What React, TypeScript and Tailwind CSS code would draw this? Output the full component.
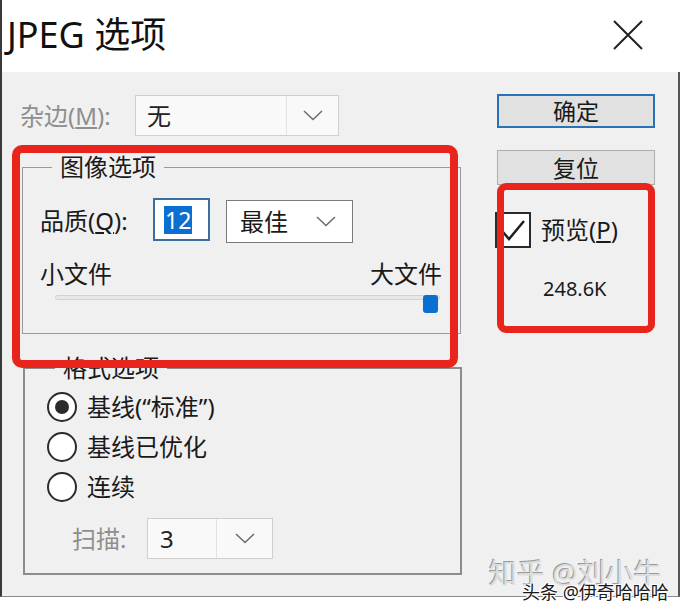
import React from "react";

const font = { fontFamily: '"Noto Sans", "Noto Sans CJK SC", sans-serif' };

function Chevron({ className = "" }: { className?: string }) {
  return (
    <svg width="20" height="11" viewBox="0 0 20 11" className={className}>
      <path d="M1 1 L10 9.5 L19 1" fill="none" stroke="#6b6b6b" strokeWidth="1.5" />
    </svg>
  );
}

function Radio({ checked, label }: { checked?: boolean; label: string }) {
  return (
    <div className="flex h-[40px] items-center gap-[10px]">
      <span className="flex h-[30px] w-[30px] items-center justify-center rounded-full border-2 border-[#2b2b2b] bg-white">
        {checked && <span className="h-[14px] w-[14px] rounded-full bg-[#2b2b2b]" />}
      </span>
      <span className="text-[24px] leading-[28px] text-[#1a1a1a]">{label}</span>
    </div>
  );
}

export default function App() {
  return (
    <div className="relative h-[616px] w-[680px] overflow-hidden bg-white" style={font}>
      {/* title bar */}
      <div className="flex h-[72px] items-center justify-between border-l-2 border-[#3a3a3a] pl-[5px] pr-[36px]">
        <div className="pb-[2px] text-[36px] leading-[44px] text-[#111]">JPEG 选项</div>
        <svg width="32" height="32" viewBox="0 0 32 32" className="mb-[2px]">
          <path d="M2 2 L30 30 M30 2 L2 30" stroke="#222" strokeWidth="2" />
        </svg>
      </div>

      {/* body */}
      <div className="flex h-[525px] border-b border-l-2 border-r-2 border-b-[#8a8a8a] border-l-[#3a3a3a] border-r-[#555] bg-[#f0f0f0]">
        {/* left column */}
        <div className="w-[461px] pl-[18px] pt-[23px]">
          <div className="flex h-[41px] items-center">
            <span className="w-[115px] text-[24px] leading-[28px] text-[#8e8e8e]">
              杂边(<u>M</u>):
            </span>
            <div className="flex h-[41px] w-[204px] items-center border border-[#cfcfcf] bg-[#f9f9f9]">
              <span className="flex-1 pl-[11px] text-[24px] leading-[28px] text-[#222]">无</span>
              <span className="flex h-full w-[52px] items-center justify-center border-l border-[#e2e2e2]">
                <Chevron />
              </span>
            </div>
          </div>

          <fieldset className="ml-[2px] mt-[15px] w-[439px] border border-[#9a9a9a] pb-[20px] pl-[17px] pr-[18px] pt-[15px]">
            <legend className="ml-[12px] px-[8px] text-[24px] leading-[32px] text-[#1a1a1a]">图像选项</legend>
            <div className="flex h-[45px] items-start">
              <span className="w-[113px] self-center text-[24px] leading-[28px] text-[#1a1a1a]">
                品质(<u>Q</u>):
              </span>
              <div className="flex h-[43px] w-[57px] items-center border-2 border-[#3d6d9e] bg-white pl-[9px]">
                <span className="bg-[#0a6fd0] px-[1px] text-[23px] leading-[28px] text-white">12</span>
              </div>
              <div className="ml-[16px] mt-[2px] flex h-[43px] w-[127px] items-center border border-[#7a7a7a] bg-white">
                <span className="flex-1 pl-[13px] text-[24px] leading-[28px] text-[#1a1a1a]">最佳</span>
                <Chevron className="mr-[16px]" />
              </div>
            </div>
            <div className="mt-[17px] flex justify-between text-[24px] leading-[28px] text-[#1a1a1a]">
              <span>小文件</span>
              <span>大文件</span>
            </div>
            <div className="relative mt-[5px] h-[18px]">
              <div className="ml-[15px] mt-[7px] h-[5px] w-[385px] rounded-full border border-[#d2d2d2] bg-[#e8e8e8]" />
              <div className="absolute left-[383px] top-0 h-[18px] w-[15px] rounded-[3px] bg-[#0a6fd0]" />
            </div>
          </fieldset>

          <fieldset className="ml-[3px] mt-[18px] w-[439px] border-2 border-[#8c8c8c] pb-[14px] pl-[22px] pt-[3px]">
            <legend className="ml-[8px] px-[8px] text-[24px] leading-[32px] text-[#1a1a1a]">格式选项</legend>
            <Radio checked label={"基线(\u201C标准\u201D)"} />
            <Radio label="基线已优化" />
            <Radio label="连续" />
            <div className="mt-[11px] flex h-[41px] items-center pl-[25px]">
              <span className="w-[75px] text-[24px] leading-[28px] text-[#8e8e8e]">扫描:</span>
              <div className="flex h-[41px] w-[126px] items-center border border-[#cfcfcf] bg-[#f9f9f9]">
                <span className="flex-1 pl-[12px] text-[24px] leading-[28px] text-[#222]">3</span>
                <span className="flex h-full w-[56px] items-center justify-center border-l border-[#e2e2e2]">
                  <Chevron />
                </span>
              </div>
            </div>
          </fieldset>
        </div>

        {/* right column */}
        <div className="ml-[34px] w-[158px] pt-[22px]">
          <button className="flex h-[34px] w-full items-center justify-center border-2 border-[#2a72b5] bg-[#e1e1e1] text-[23px] leading-[28px] text-[#1a1a1a]">
            确定
          </button>
          <button className="mt-[22px] flex h-[35px] w-full items-center justify-center border border-[#adadad] bg-[#e1e1e1] text-[23px] leading-[28px] text-[#1a1a1a]">
            复位
          </button>
          <div className="-ml-[2px] mt-[27px] flex h-[36px] items-center gap-[10px]">
            <span className="flex h-[36px] w-[36px] items-center justify-center border-2 border-[#2b2b2b] bg-white">
              <svg width="26" height="22" viewBox="0 0 26 22">
                <path d="M3 13 L9 20 L24 2" fill="none" stroke="#1f1f1f" strokeWidth="2.5" />
              </svg>
            </span>
            <span className="text-[24px] leading-[28px] text-[#1a1a1a]">
              预览(<u>P</u>)
            </span>
          </div>
          <div className="mt-[29px] pl-[46px] text-[20px] leading-[24px] text-[#1a1a1a]">248.6K</div>
        </div>
      </div>

      {/* red annotation boxes */}
      <div className="absolute left-[12px] top-[145px] h-[223px] w-[446px] rounded-[10px] border-[8px] border-[#e8241d]" />
      <div className="absolute left-[497px] top-[183px] h-[150px] w-[158px] rounded-[9px] border-[7px] border-[#e8241d]" />

      {/* watermarks */}
      <div
        className="absolute left-[489px] top-[556px] text-[28px] leading-[34px] text-[#dcdcdc]"
        style={{ textShadow: "-1px -1px 0 #9a9a9a" }}
      >
        知乎 @刘小牛
      </div>
      <div
        className="absolute left-[522px] top-[580px] text-[18px] leading-[24px] text-[#1a1a1a]"
        style={{ textShadow: "1px 1px 0 #fff, -1px -1px 0 #fff, 1px -1px 0 #fff, -1px 1px 0 #fff" }}
      >
        头条 @伊奇哈哈哈
      </div>
    </div>
  );
}
